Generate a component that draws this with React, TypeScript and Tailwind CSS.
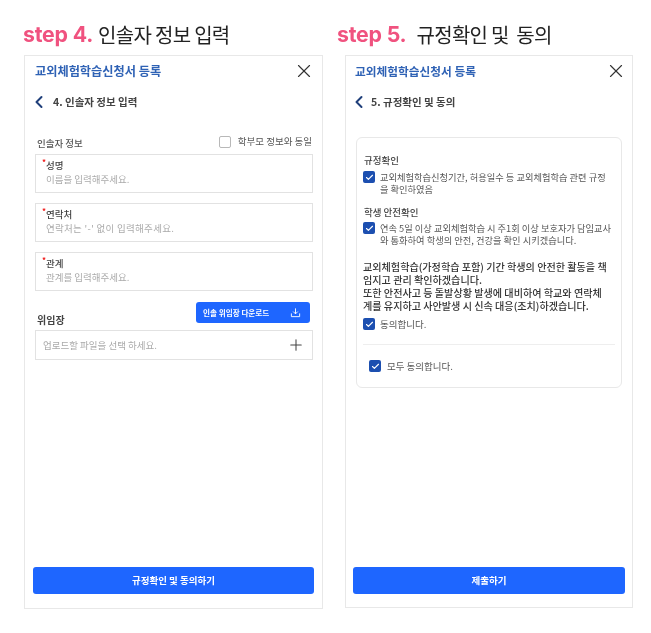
import type { ReactNode } from "react";
import { Check, ChevronLeft, Plus, X } from "lucide-react";

const cjk = "font-['Noto_Sans_CJK_KR','Noto_Sans',sans-serif]";

function Heading({ step, title, className }: { step: string; title: string; className: string }) {
    return (
        <div className={`flex items-center h-[30px] ${className}`}>
            <span className="font-['Inter',sans-serif] text-[21.3px] font-bold text-[#f0527f] tracking-[-0.2px]">{step}</span>
            <span className={`${cjk} text-[20px] text-[#222] tracking-[-0.7px]`}>{title}</span>
        </div>
    );
}

function PanelHeader({ className, titleSize }: { className: string; titleSize: string }) {
    return (
        <div className={`flex items-center justify-between h-[30px] ${className}`}>
            <span className={`${titleSize} font-bold text-[#2f62b5]`}>교외체험학습신청서 등록</span>
            <X size={22} strokeWidth={1.25} className="text-[#333]" />
        </div>
    );
}

function SubHeader({ title, className, textClass }: { title: string; className: string; textClass: string }) {
    return (
        <div className={`flex items-center h-[20px] ${className}`}>
            <ChevronLeft size={20} strokeWidth={2.4} className="text-[#1f3f7a] -ml-[7px]" />
            <span className={`text-[10.5px] font-bold text-[#444] ${textClass}`}>{title}</span>
        </div>
    );
}

function Field({ label, placeholder, placeholderClass = "" }: { label: string; placeholder: string; placeholderClass?: string }) {
    return (
        <div className="relative h-[39px] border border-[#e2e2e2] pl-[10px] pt-[3px]">
            <span className="absolute left-[6px] top-[3px] text-[8px] leading-[8px] text-[#f01818] font-bold">*</span>
            <div className="text-[9.5px] leading-[14px] font-medium text-[#444]">{label}</div>
            <div className={`text-[9.5px] leading-[14px] text-[#aaa] ${placeholderClass}`}>{placeholder}</div>
        </div>
    );
}

function Tick() {
    return (
        <span className="flex items-center justify-center w-[12px] h-[12px] rounded-[2px] bg-[#1c4fb0] shrink-0">
            <Check size={9} strokeWidth={3} className="text-white" />
        </span>
    );
}

function CheckRow({ children, className }: { children: ReactNode; className: string }) {
    return (
        <div className={`flex gap-[5px] ${className}`}>
            <Tick />
            <p className="text-[9.25px] leading-[12px] text-[#555] whitespace-nowrap">{children}</p>
        </div>
    );
}

function SubmitButton({ label }: { label: string }) {
    return (
        <button className="mt-auto h-[27px] rounded-[3px] bg-[#1e66ff] text-white text-[9.5px] font-bold flex items-center justify-center">
            {label}
        </button>
    );
}

export default function App() {
    return (
        <div className={`${cjk} w-[651px] h-[633px] bg-white flex pl-[24px] pt-[20px] gap-[22px] blur-[0.3px]`}>
            <div className="w-[299px] flex flex-col">
                <Heading step="step 4." title="인솔자 정보 입력" className="gap-[5px] -ml-px" />
                <div className="h-[554px] mt-[5px] border border-[#e8e8e8] px-[8px] pb-[14px] flex flex-col">
                    <PanelHeader className="pl-[2px] -mr-[1px]" titleSize="text-[12.2px]" />
                    <div className="px-[3px]">
                        <SubHeader title="4. 인솔자 정보 입력" className="mt-[6px]" textClass="ml-[4px]" />
                    </div>
                    <div className="pl-[2px] pr-[1px] mt-[23px]">
                        <div className="flex items-center justify-between h-[14px] pl-[2px] pr-px">
                            <span className="text-[9.5px] font-medium text-[#555] mt-[2px]">인솔자 정보</span>
                            <div className="flex items-center gap-[7px] -mt-[1px]">
                                <span className="w-[12px] h-[12px] rounded-[2px] border border-[#b8b8b8]" />
                                <span className="text-[9.5px] text-[#555]">학부모 정보와 동일</span>
                            </div>
                        </div>
                        <div className="flex flex-col gap-[10px] mt-[5px]">
                            <Field label="성명" placeholder="이름을 입력해주세요." />
                            <Field label="연락처" placeholder="연락처는 '-' 없이 입력해주세요." placeholderClass="tracking-[0.3px]" />
                            <Field label="관계" placeholder="관계를 입력해주세요." />
                        </div>
                        <div className="flex items-end justify-between h-[28px] mt-[11px] pl-[2px] pr-[3px]">
                            <span className="text-[10px] font-bold text-[#444] mb-[3px]">위임장</span>
                            <div className="flex items-center justify-between w-[114px] h-[21px] rounded-[3px] bg-[#1e66ff] pl-[7px] pr-[9px] mb-[7px]">
                                <span className="text-[7.6px] font-bold text-white">인솔 위임장 다운로드</span>
                                <svg width="11" height="11" viewBox="0 0 24 24" fill="none" stroke="#fff" strokeWidth="2">
                                    <path d="M12 3v12M7 10l5 5 5-5M3 14v7h18v-7" />
                                </svg>
                            </div>
                        </div>
                        <div className="flex items-center justify-between h-[30px] border border-[#e2e2e2] pl-[7px] pr-[7px]">
                            <span className="text-[9.5px] text-[#aaa]">업로드할 파일을 선택 하세요.</span>
                            <Plus size={18} strokeWidth={1.4} className="text-[#444]" />
                        </div>
                    </div>
                    <SubmitButton label="규정확인 및 동의하기" />
                </div>
            </div>
            <div className="w-[288px] flex flex-col">
                <Heading step="step 5." title={"규정확인 및\u00a0\u00a0동의"} className="gap-[10px] -ml-[8px]" />
                <div className="h-[553px] mt-[5px] border border-[#e8e8e8] px-[7px] pb-[13px] flex flex-col">
                    <PanelHeader className="pl-[2px] -mr-[2px]" titleSize="text-[11.7px]" />
                    <div className="px-[3px]">
                        <SubHeader title="5. 규정확인 및 동의" className="mt-[6px]" textClass="ml-[2px]" />
                    </div>
                    <div className="mx-[3px] w-[266px] h-[251px] mt-[25px] border border-[#e8e8e8] rounded-[6px] px-[6px] pt-[15px]">
                        <div className="text-[9.5px] leading-[14px] font-medium text-[#444] pl-[1px]">규정확인</div>
                        <CheckRow className="mt-[4px]">
                            교외체험학습신청기간, 허용일수 등 교외체험학습 관련 규정
                            <br />을 확인하였음
                        </CheckRow>
                        <div className="text-[9.5px] leading-[14px] font-medium text-[#444] pl-[1px] mt-[10px]">학생 안전확인</div>
                        <CheckRow className="mt-[3px]">
                            연속 5일 이상 교외체험학습 시 주1회 이상 보호자가 담임교사
                            <br />와 통화하여 학생의 안전, 건강을 확인 시키겠습니다.
                        </CheckRow>
                        <p className="text-[10.1px] leading-[13px] font-medium text-[#333] mt-[14px] whitespace-nowrap">
                            교외체험학습(가정학습 포함) 기간 학생의 안전한 활동을 책
                            <br />임지고 관리 확인하겠습니다.
                            <br />또한 안전사고 등 돌발상황 발생에 대비하여 학교와 연락체
                            <br />계를 유지하고 사안발생 시 신속 대응(조치)하겠습니다.
                        </p>
                        <div className="flex items-center gap-[5px] mt-[5px]">
                            <Tick />
                            <span className="text-[9.5px] text-[#555]">동의합니다.</span>
                        </div>
                        <div className="h-px bg-[#eeeeee] mt-[13px]" />
                        <div className="flex items-center gap-[6px] mt-[14px] pl-[6px]">
                            <Tick />
                            <span className="text-[9.5px] text-[#555]">모두 동의합니다.</span>
                        </div>
                    </div>
                    <SubmitButton label="제출하기" />
                </div>
            </div>
        </div>
    );
}
